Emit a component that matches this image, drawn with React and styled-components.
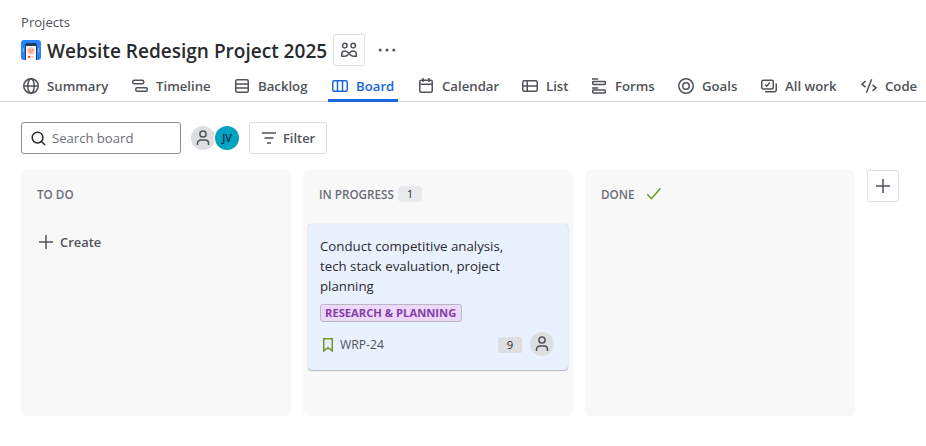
import React from 'react';
import styled, { createGlobalStyle, css } from 'styled-components';

const GlobalStyle = createGlobalStyle`
  *, *::before, *::after { box-sizing: border-box; }
  body {
    margin: 0;
    background: #fff;
    color: #292a2e;
    font-family: "Open Sans", "Noto Sans", sans-serif;
    font-size: 13.25px;
    line-height: 20px;
    overflow: hidden;
  }
  button { font: inherit; color: inherit; padding: 0; background: none; border: 0; }
`;

const Page = styled.div`
  width: 926px;
  height: 446px;
  overflow: hidden;
`;
const Header = styled.header`
  padding: 12px 0 0 21px;
`;
const Breadcrumb = styled.div`
  height: 20px;
  color: #505258;
  font-size: 13.1px;
`;
const TitleRow = styled.div`
  display: flex;
  align-items: center;
  height: 36px;
`;
const Title = styled.h1`
  margin: 0 6px;
  padding-top: 2px;
  width: 280px;
  flex: none;
  font-size: 19.05px;
  font-weight: 600;
  line-height: 24px;
  white-space: nowrap;
`;
const SquareButton = styled.button`
  display: flex;
  align-items: center;
  justify-content: center;
  width: 32px;
  height: 32px;
  flex: none;
  border: 1px solid #dddee1;
  border-radius: 3px;
  color: #505258;
`;
const MoreButton = styled.button`
  display: flex;
  align-items: center;
  justify-content: center;
  width: 32px;
  height: 32px;
  margin-left: 6px;
  color: #505258;
`;
const Tabs = styled.nav`
  display: flex;
  gap: 16px;
  height: 34px;
  padding-left: 19px;
  box-shadow: inset 0 -1px #d5d6da;
`;
const Tab = styled.div`
  display: flex;
  gap: 8px;
  align-items: center;
  flex: none;
  height: 34px;
  padding: 5px 4px 0;
  color: #505258;
  font-size: 13.2px;
  font-weight: 600;
  white-space: nowrap;
  border-bottom: 3px solid transparent;
  ${(p) => p.$active && css`
    color: #1868db;
    border-bottom-color: #1868db;
  `}
`;
const TabLabel = styled.span`
  width: ${(p) => p.$width}px;
`;
const Toolbar = styled.div`
  display: flex;
  align-items: center;
  height: 32px;
  margin: 20px 0 16px 21px;
`;
const SearchBox = styled.div`
  display: flex;
  align-items: center;
  gap: 6px;
  width: 160px;
  height: 32px;
  padding-left: 9px;
  border: 1px solid #8c8f97;
  border-radius: 3px;
  color: #6b6e76;
  font-size: 13.1px;
  svg { color: #292a2e; }
`;
const AvatarGroup = styled.div`
  display: flex;
  margin-left: 10px;
`;
const Avatar = styled.div`
  display: flex;
  align-items: center;
  justify-content: center;
  flex: none;
  width: 24px;
  height: 24px;
  border-radius: 50%;
  background: ${(p) => (p.$initials ? '#00a3bf' : '#dddee1')};
  color: ${(p) => (p.$initials ? '#172b4d' : '#505258')};
  font-size: 10.5px;
  font-weight: 600;
  box-shadow: ${(p) => (p.$initials ? '0 0 0 1.5px #fff' : 'none')};
  svg { margin-top: -1px; }
`;
const FilterButton = styled.button`
  display: flex;
  align-items: center;
  gap: 6px;
  width: 78px;
  height: 32px;
  margin-left: 10px;
  padding-left: 11px;
  border: 1px solid #dddee1;
  border-radius: 3px;
  color: #505258;
  font-size: 12.9px;
  font-weight: 600;
`;
const Board = styled.main`
  display: flex;
  align-items: flex-start;
  gap: 12px;
  padding-left: 21px;
`;
const Column = styled.section`
  width: 270px;
  height: 246px;
  flex: none;
  padding: 0 5px;
  border-radius: 6px;
  background: #f8f8f8;
`;
const ColumnHeader = styled.div`
  display: flex;
  align-items: center;
  height: 49px;
  padding: 0 0 1px 11px;
  color: #6b6e76;
  font-size: 11.7px;
  font-weight: 600;
`;
const ColumnName = styled.span`
  width: ${(p) => p.$width}px;
`;
const Count = styled.span`
  width: 24px;
  height: 16px;
  border-radius: ${(p) => p.$radius}px;
  background: ${(p) => p.$tone};
  color: #292a2e;
  font-size: 11.3px;
  font-weight: 500;
  line-height: 16px;
  text-align: center;
`;
const CreateButton = styled.button`
  display: flex;
  align-items: center;
  gap: 6px;
  height: 32px;
  margin: 7px 0 0 12px;
  color: #505258;
  font-size: 12.9px;
  font-weight: 600;
`;
const Card = styled.article`
  height: 146px;
  margin-top: 5px;
  padding: 12px 14px 0 12px;
  border-radius: 4px;
  background: #e9f0fe;
  box-shadow: 0 1px 1px rgba(30, 31, 33, 0.28), 0 0 1px rgba(30, 31, 33, 0.3);
`;
const CardTitle = styled.p`
  margin: 0;
  width: 200px;
`;
const Tag = styled.div`
  width: 142px;
  height: 18px;
  margin-top: 8px;
  padding-left: 4px;
  border: 1px solid #b7b9be;
  border-radius: 3px;
  background: #eed7fc;
  color: #803fa5;
  font-size: 11.2px;
  font-weight: 700;
  line-height: 16px;
  white-space: nowrap;
`;
const CardFooter = styled.div`
  display: flex;
  align-items: center;
  height: 24px;
  margin-top: 10px;
  > svg { margin-top: 2px; }
`;
const IssueKey = styled.span`
  margin: 2px auto 0 4px;
  color: #505258;
  font-size: 12.2px;
  font-weight: 500;
`;
const FooterCount = styled(Count)`
  margin: 2px 8px 0 0;
`;
const Svg = styled.svg`
  display: block;
  flex: none;
  overflow: visible;
`;

const glyphs = {
  globe: <><circle cx="8" cy="8" r="7.25" /><ellipse cx="8" cy="8" rx="3.2" ry="7.25" /><path d="M.75 8h14.5" /></>,
  timeline: <><rect x=".75" y="2.25" width="11" height="3.5" rx="1.5" /><rect x="3.75" y="9.75" width="11.5" height="3.5" rx="1.5" /></>,
  backlog: <><rect x="1.75" y="1.75" width="12.5" height="12.5" rx="1.5" /><path d="M2 6h12M2 10h12" /></>,
  board: <><rect x=".75" y="2.75" width="14.5" height="10.5" rx="1.5" /><path d="M5.5 3v10M10.5 3v10" /></>,
  calendar: <><rect x="1.75" y="2.25" width="12.5" height="12" rx="1.5" /><path d="M2 6.25h12M5 0v4M11 0v4" /></>,
  list: <><rect x=".75" y="2.75" width="14.5" height="10.5" rx="1.5" /><path d="M5.25 3v10M1 8h14" /></>,
  forms: <><path d="M1 1h6.2M1 10h6.2" /><rect x="1.75" y="3.5" width="12.5" height="2.9" rx=".7" /><rect x="1.75" y="12.1" width="12.5" height="2.9" rx=".7" /></>,
  goals: <><circle cx="8" cy="8" r="7.25" /><circle cx="8" cy="8" r="3.25" /></>,
  work: <><rect x=".75" y="2.25" width="11.5" height="8.7" rx="1.5" /><path d="m4.2 6.6 1.6 1.6 3-3.6M15.25 5.5v6.25a2 2 0 0 1-2 2H4" /></>,
  code: <path d="M4.5 3.2.9 6.2l3.6 3M11.5 6.8l3.6 3-3.6 3M10.6 1.2 5.4 14.8" />,
  search: <><circle cx="7" cy="7" r="5.75" /><path d="m11.2 11.2 3.8 3.8" /></>,
  person: <><circle cx="8" cy="4" r="3.1" /><path d="M2.5 15v-1.8A3.2 3.2 0 0 1 5.7 10h4.6a3.2 3.2 0 0 1 3.2 3.2V15" /></>,
  team: <><circle cx="3.8" cy="3.6" r="2.3" /><circle cx="12.2" cy="3.6" r="2.3" /><path d="M.75 14.8V12a3.1 3.1 0 0 1 3.1-3.1c3.9 0 4.3 5.3 8.2 5.3h3.2V12a3.1 3.1 0 0 0-3.1-3.1c-1.8 0-2.9 1-3.9 2.2M7.4 12.4c-1 1-2 1.8-3.6 1.8h-3" /></>,
  filter: <path d="M1 3h14M3.5 8h9M6 13h4" />,
  plus: <path d="M8 1v14M1 8h14" />,
  check: <path d="m1.2 8.3 4.2 4.4L14.5 2.2" />,
  bookmark: <path d="M3.75 1.75h8.5v12.2L8 10.6l-4.25 3.35z" />,
};

function Icon({ name, size = 16, weight = 1.5, color = 'currentColor' }) {
  return (
    <Svg width={size} height={size} viewBox="0 0 16 16" fill="none" stroke={color} strokeWidth={weight} aria-hidden="true">
      {glyphs[name]}
    </Svg>
  );
}

function ProjectLogo() {
  return (
    <Svg width="20" height="20" viewBox="0 0 20 20" aria-hidden="true">
      <rect width="20" height="20" rx="3" fill="#2684ff" />
      <path d="M4 20V5Q4 3 6 3h8Q16 3 16 5v15z" fill="#253858" />
      <path d="M5 6h10v14H5z" fill="#f4f5f7" />
      <circle cx="10" cy="10.8" r="3.5" fill="#ffbdad" />
      <path d="M8.3 9.8h.9v.9h-.9zM10.9 9.8h.9v.9h-.9z" fill="#bf4c3e" />
      <path d="M9 11.8q1 1.1 2 0z" fill="#de350b" />
      <path d="M7 16h2.5v2H7z" fill="#ff5630" />
      <path d="M10.5 16H13v2h-2.5z" fill="#ffd5cc" />
      <path d="M2.3 8v4.3M17.7 8v4.3" stroke="#8fbfff" />
    </Svg>
  );
}

const tabs = [
  ['globe', 'Summary', 61],
  ['timeline', 'Timeline', 54],
  ['backlog', 'Backlog', 50],
  ['board', 'Board', 38],
  ['calendar', 'Calendar', 56],
  ['list', 'List', 21],
  ['forms', 'Forms', 39],
  ['goals', 'Goals', 35],
  ['work', 'All work', 52],
  ['code', 'Code', 33],
];

export default function App() {
  return (
    <Page>
      <GlobalStyle />
      <Header>
        <Breadcrumb>Projects</Breadcrumb>
        <TitleRow>
          <ProjectLogo />
          <Title>Website Redesign Project 2025</Title>
          <SquareButton aria-label="Team"><Icon name="team" weight={1.5} /></SquareButton>
          <MoreButton aria-label="More actions">
            <Svg width="18" height="4" viewBox="0 0 18 4" fill="currentColor">
              <circle cx="2.2" cy="2" r="1.5" /><circle cx="9" cy="2" r="1.5" /><circle cx="15.8" cy="2" r="1.5" />
            </Svg>
          </MoreButton>
        </TitleRow>
      </Header>
      <Tabs>
        {tabs.map(([icon, label, width]) => (
          <Tab key={label} $active={label === 'Board'}>
            <Icon name={icon} />
            <TabLabel $width={width}>{label}</TabLabel>
          </Tab>
        ))}
      </Tabs>
      <Toolbar>
        <SearchBox><Icon name="search" size={15} weight={1.6} />Search board</SearchBox>
        <AvatarGroup>
          <Avatar><Icon name="person" /></Avatar>
          <Avatar $initials>JV</Avatar>
        </AvatarGroup>
        <FilterButton><Icon name="filter" />Filter</FilterButton>
      </Toolbar>
      <Board>
        <Column>
          <ColumnHeader>TO DO</ColumnHeader>
          <CreateButton><Icon name="plus" />Create</CreateButton>
        </Column>
        <Column>
          <ColumnHeader>
            <ColumnName $width={79}>IN PROGRESS</ColumnName>
            <Count $radius={4} $tone="#e9eaec">1</Count>
          </ColumnHeader>
          <Card>
            <CardTitle>Conduct competitive analysis, tech stack evaluation, project planning</CardTitle>
            <Tag>RESEARCH &amp; PLANNING</Tag>
            <CardFooter>
              <Icon name="bookmark" color="#6a9a23" />
              <IssueKey>WRP-24</IssueKey>
              <FooterCount $radius={2} $tone="#dddee1">9</FooterCount>
              <Avatar><Icon name="person" /></Avatar>
            </CardFooter>
          </Card>
        </Column>
        <Column>
          <ColumnHeader>
            <ColumnName $width={45}>DONE</ColumnName>
            <Icon name="check" color="#6a9a23" />
          </ColumnHeader>
        </Column>
        <SquareButton aria-label="Add column"><Icon name="plus" /></SquareButton>
      </Board>
    </Page>
  );
}
